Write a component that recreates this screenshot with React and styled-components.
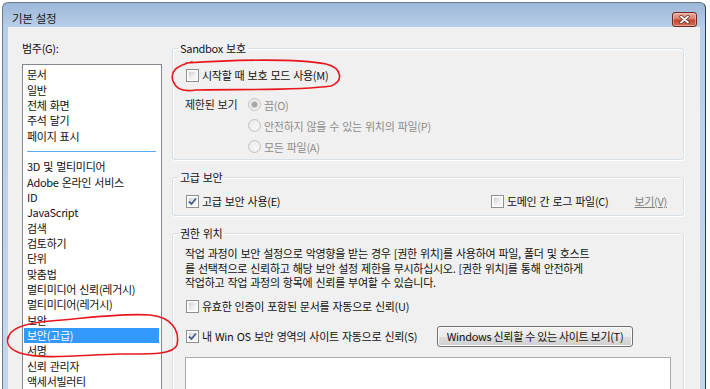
import React from "react";
import styled, { createGlobalStyle } from "styled-components";

const GlobalStyle = createGlobalStyle`
  html, body {
    margin: 0;
    padding: 0;
    background: #ffffff;
    overflow: hidden;
  }
  body {
    font-family: "Noto Sans CJK KR", "Noto Sans", sans-serif;
    font-size: 11px;
    letter-spacing: -0.3px;
    word-spacing: 1px;
    color: #111;
  }
`;

const Page = styled.div`
  position: relative;
  width: 710px;
  height: 389px;
  overflow: hidden;
`;

const Frame = styled.div`
  margin: 2px 0 0 2px;
  width: 704px;
  height: 400px;
  box-sizing: border-box;
  border: 1px solid #6a7b8e;
  border-right-color: #24424f;
  border-bottom: none;
  border-radius: 6px 6px 0 0;
  padding: 0 5px;
  background: linear-gradient(to bottom, #9db7d7 0, #b8cee8 24px, #c3d7ec 100%);
  display: flex;
  flex-direction: column;
`;

const TitleBar = styled.div`
  height: 24px;
  display: flex;
  align-items: flex-start;
  justify-content: space-between;
`;

const Title = styled.div`
  margin: 8px 0 0 4px;
  font-size: 11.5px;
  line-height: 15px;
  color: #1a1a1a;
`;

const CloseButton = styled.div`
  margin: 9px 3px 0 0;
  width: 25px;
  height: 15px;
  box-sizing: border-box;
  border: 1px solid #6b2a20;
  border-radius: 3px;
  background: linear-gradient(to bottom, #e9ad9f 0, #d77d69 45%, #c2442d 55%, #d4735c 100%);
  box-shadow: inset 0 0 0 1px rgba(255, 220, 210, 0.45);
  display: flex;
  align-items: center;
  justify-content: center;
`;

const Body = styled.div`
  flex: 1;
  background: #f0f0f0;
  display: flex;
  overflow: hidden;
`;

const Sidebar = styled.div`
  width: 164px;
  flex-shrink: 0;
  box-sizing: border-box;
  padding: 14px 0 0 14px;
  display: flex;
  flex-direction: column;
`;

const FieldLabel = styled.div`
  line-height: 15px;
  height: 15px;
  margin-bottom: 8px;
`;

const ListBox = styled.div`
  width: 140px;
  height: 360px;
  box-sizing: border-box;
  border: 1px solid #828790;
  background: #ffffff;
  padding-top: 2.3px;
`;

const Item = styled.div`
  height: 15.35px;
  line-height: 15.35px;
  margin: 0 2px 0 1px;
  padding-left: 3px;
  white-space: nowrap;
  background: ${(p) => (p.$selected ? "#3399ff" : "transparent")};
  color: ${(p) => (p.$selected ? "#ffffff" : "#111")};
`;

const Separator = styled.div`
  height: 15.35px;
  display: flex;
  align-items: center;
  padding: 0 5px 0 4px;
  &::after {
    content: "";
    flex: 1;
    height: 1px;
    background: #5ea8ee;
  }
`;

const Main = styled.div`
  flex: 1;
  box-sizing: border-box;
  padding: 14px 16px 0 0;
  display: flex;
  flex-direction: column;
`;

const Group = styled.fieldset`
  margin: ${(p) => (p.$first ? "0" : "10px 0 0 0")};
  padding: ${(p) => p.$pad || "6px 12px 4px 12px"};
  border: 1px solid #d5dfe5;
  border-radius: 3px;
  box-shadow: inset 1px 1px 0 #ffffff, 1px 1px 0 #ffffff;
  min-width: 0;
`;

const Legend = styled.legend`
  padding: 0 2px;
  margin-left: -7px;
  line-height: 15px;
  height: 15px;
  color: #111;
`;

const Row = styled.div`
  display: flex;
  align-items: center;
  height: ${(p) => p.$h || 20}px;
  margin-top: ${(p) => p.$mt || 0}px;
`;

const CheckItem = styled.label`
  display: flex;
  align-items: center;
  white-space: nowrap;
  width: ${(p) => (p.$w ? `${p.$w}px` : "auto")};
  margin-left: ${(p) => (p.$auto ? "auto" : "0")};
`;

const Box = styled.span`
  width: 13px;
  height: 13px;
  box-sizing: border-box;
  border: 1px solid #8e8f8f;
  background: #ffffff;
  margin: 0 3px 0 1px;
  display: flex;
  align-items: center;
  justify-content: center;
  position: relative;
  &::before {
    content: "";
    position: absolute;
    inset: 1px;
    background: linear-gradient(135deg, #cdd0d4 0%, #eef0f2 60%, #fafafa 100%);
    border: 1px solid #f4f4f4;
  }
  svg {
    position: relative;
  }
`;

const Restricted = styled.div`
  display: flex;
  margin-top: 9px;
`;

const RestrictedLabel = styled.div`
  width: 63px;
  height: 21px;
  line-height: 21px;
  color: #222;
  white-space: nowrap;
`;

const RadioList = styled.div`
  display: flex;
  flex-direction: column;
`;

const RadioRow = styled.div`
  display: flex;
  align-items: center;
  height: 21px;
  color: #8c8c8c;
  white-space: nowrap;
`;

const Radio = styled.span`
  width: 13px;
  height: 13px;
  box-sizing: border-box;
  border-radius: 50%;
  border: 1px solid #c2c2c2;
  background: radial-gradient(circle at 60% 60%, #f7f7f7 0, #e6e6e6 100%);
  margin-right: 3px;
  display: flex;
  align-items: center;
  justify-content: center;
  &::after {
    content: "";
    width: 5px;
    height: 5px;
    border-radius: 50%;
    background: ${(p) => (p.$on ? "#a6a6a6" : "transparent")};
    box-shadow: ${(p) => (p.$on ? "0 0 0 1px #c9c9c9" : "none")};
  }
`;

const LinkText = styled.span`
  margin-left: 26px;
  margin-right: 4px;
  color: #808080;
  text-decoration: underline;
  white-space: nowrap;
`;

const Paragraph = styled.p`
  margin: 0;
  line-height: 14.5px;
  white-space: nowrap;
`;

const Button = styled.div`
  width: 196px;
  height: 21px;
  box-sizing: border-box;
  border: 1px solid #707070;
  border-radius: 3px;
  background: linear-gradient(to bottom, #f2f2f2 0, #ebebeb 50%, #dddddd 51%, #cfcfcf 100%);
  box-shadow: inset 0 0 0 1px #fcfcfc;
  display: flex;
  align-items: center;
  justify-content: center;
  white-space: nowrap;
  word-spacing: 0;
  color: #111;
`;

const LocationBox = styled.div`
  margin-top: 10px;
  height: 100px;
  border: 1px solid #abadb3;
  background: #ffffff;
`;

const Annotation = styled.svg`
  position: absolute;
  left: 0;
  top: 0;
  pointer-events: none;
`;

const Check = ({ checked }) => (
  <Box>
    {checked && (
      <svg width="9" height="9" viewBox="0 0 9 9">
        <path d="M1 4.5 L3.5 7 L8 1.5" fill="none" stroke="#485c8a" strokeWidth="1.8" />
      </svg>
    )}
  </Box>
);

const categories = [
  "문서",
  "일반",
  "전체 화면",
  "주석 달기",
  "페이지 표시",
  "-",
  "3D 및 멀티미디어",
  "Adobe 온라인 서비스",
  "ID",
  "JavaScript",
  "검색",
  "검토하기",
  "단위",
  "맞춤법",
  "멀티미디어 신뢰(레거시)",
  "멀티미디어(레거시)",
  "보안",
  "보안(고급)",
  "서명",
  "신뢰 관리자",
  "액세서빌러티",
];

export default function App() {
  return (
    <Page>
      <GlobalStyle />
      <Frame>
        <TitleBar>
          <Title>기본 설정</Title>
          <CloseButton>
            <svg width="11" height="9" viewBox="0 0 11 9">
              <path d="M2 1.5 L9 7.5 M9 1.5 L2 7.5" stroke="#5a2a22" strokeWidth="3.2" strokeLinecap="round" />
              <path d="M2 1.5 L9 7.5 M9 1.5 L2 7.5" stroke="#ffffff" strokeWidth="1.8" strokeLinecap="round" />
            </svg>
          </CloseButton>
        </TitleBar>
        <Body>
          <Sidebar>
            <FieldLabel>범주(G):</FieldLabel>
            <ListBox>
              {categories.map((c, i) =>
                c === "-" ? (
                  <Separator key={i} />
                ) : (
                  <Item key={i} $selected={c === "보안(고급)"}>
                    {c}
                  </Item>
                )
              )}
            </ListBox>
          </Sidebar>
          <Main>
            <Group $first $pad="9px 12px 2px 12px">
              <Legend>Sandbox 보호</Legend>
              <Row>
                <CheckItem>
                  <Check />
                  시작할 때 보호 모드 사용(M)
                </CheckItem>
              </Row>
              <Restricted>
                <RestrictedLabel>제한된 보기</RestrictedLabel>
                <RadioList>
                  <RadioRow>
                    <Radio $on />
                    끔(O)
                  </RadioRow>
                  <RadioRow>
                    <Radio />
                    안전하지 않을 수 있는 위치의 파일(P)
                  </RadioRow>
                  <RadioRow>
                    <Radio />
                    모든 파일(A)
                  </RadioRow>
                </RadioList>
              </Restricted>
            </Group>

            <Group>
              <Legend>고급 보안</Legend>
              <Row>
                <CheckItem>
                  <Check checked />
                  고급 보안 사용(E)
                </CheckItem>
                <CheckItem $auto>
                  <Check />
                  도메인 간 로그 파일(C)
                </CheckItem>
                <LinkText>보기(V)</LinkText>
              </Row>
            </Group>

            <Group $pad="5px 12px 0 12px">
              <Legend>권한 위치</Legend>
              <Paragraph>
                작업 과정이 보안 설정으로 악영향을 받는 경우 [권한 위치]를 사용하여 파일, 폴더 및 호스트
                <br />
                를 선택적으로 신뢰하고 해당 보안 설정 제한을 무시하십시오. [권한 위치]를 통해 안전하게
                <br />
                작업하고 작업 과정의 항목에 신뢰를 부여할 수 있습니다.
              </Paragraph>
              <Row $mt={6.5}>
                <CheckItem>
                  <Check />
                  유효한 인증이 포함된 문서를 자동으로 신뢰(U)
                </CheckItem>
              </Row>
              <Row $mt={9} $h={22}>
                <CheckItem $w={252}>
                  <Check checked />
                  내 Win OS 보안 영역의 사이트 자동으로 신뢰(S)
                </CheckItem>
                <Button>Windows 신뢰할 수 있는 사이트 보기(T)</Button>
              </Row>
              <LocationBox />
            </Group>
          </Main>
        </Body>
      </Frame>
      <Annotation width="710" height="389" viewBox="0 0 710 389">
        <g fill="none" stroke="#e8161c" strokeWidth="1.6" strokeLinecap="round">
          <path d="M186 63 C230 60 296 58 326 64 C342 68 344 81 331 86 C296 91 236 89 196 90 C184 92 176 90 173 81 C170 72 175 66 192 62" />
          <path d="M8 339 C9 328 26 323 50 321 C88 318 120 313 150 315 C172 317 180 331 177 345 C173 355 150 354 120 354 C82 355 42 360 20 353 C9 349 6 344 8 337" />
        </g>
      </Annotation>
    </Page>
  );
}
